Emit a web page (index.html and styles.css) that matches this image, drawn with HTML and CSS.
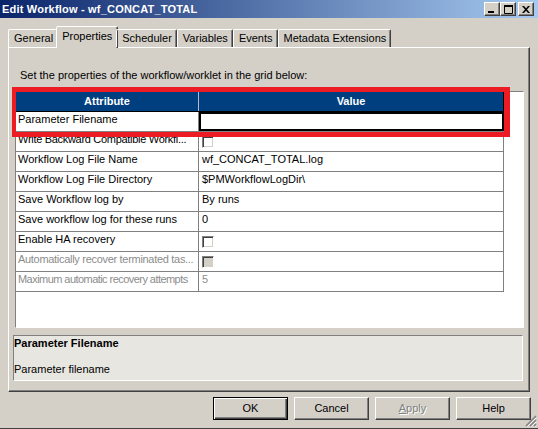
FILE: index.html
```html
<!DOCTYPE html>
<html>
<head>
<meta charset="utf-8">
<link rel="stylesheet" href="styles.css">
</head>
<body>
<div class="window">
  <div class="titlebar">
    <span class="title">Edit Workflow - wf_CONCAT_TOTAL</span>
    <div class="tb-buttons">
      <span class="tb-btn"><svg width="8" height="7" viewBox="0 0 8 7"><rect x="0" y="5" width="6" height="2" fill="#000"/></svg></span>
      <span class="tb-btn"><svg width="9" height="9" viewBox="0 0 9 9"><path d="M0.5 0.5h8v8h-8z M0 1.5h9" fill="none" stroke="#000" stroke-width="1"/><rect x="0" y="0" width="9" height="2" fill="#000"/></svg></span>
      <span class="tb-btn tb-close"><svg width="8" height="7" viewBox="0 0 8 7"><path d="M0 0h2l2 2.2 2-2.2h2L5 3.5 8 7H6L4 4.8 2 7H0l3-3.5z" fill="#000"/></svg></span>
    </div>
  </div>

  <div class="tabs">
    <div class="tab">General</div>
    <div class="tab active">Properties</div>
    <div class="tab">Scheduler</div>
    <div class="tab">Variables</div>
    <div class="tab">Events</div>
    <div class="tab">Metadata Extensions</div>
  </div>

  <div class="panel">
    <p class="intro">Set the properties of the workflow/worklet in the grid below:</p>
    <div class="grid">
      <div class="row head">
        <div class="cell attr">Attribute</div>
        <div class="cell val">Value</div>
      </div>
      <div class="row">
        <div class="cell attr">Parameter Filename</div>
        <div class="cell val editing"></div>
      </div>
      <div class="row">
        <div class="cell attr tight">Write Backward Compatible Workfl...</div>
        <div class="cell val"><span class="check"></span></div>
      </div>
      <div class="row">
        <div class="cell attr">Workflow Log File Name</div>
        <div class="cell val">wf_CONCAT_TOTAL.log</div>
      </div>
      <div class="row">
        <div class="cell attr">Workflow Log File Directory</div>
        <div class="cell val">$PMWorkflowLogDir\</div>
      </div>
      <div class="row">
        <div class="cell attr">Save Workflow log by</div>
        <div class="cell val">By runs</div>
      </div>
      <div class="row">
        <div class="cell attr">Save workflow log for these runs</div>
        <div class="cell val">0</div>
      </div>
      <div class="row">
        <div class="cell attr">Enable HA recovery</div>
        <div class="cell val"><span class="check"></span></div>
      </div>
      <div class="row disabled">
        <div class="cell attr tight">Automatically recover terminated tas...</div>
        <div class="cell val"><span class="check check-disabled"></span></div>
      </div>
      <div class="row disabled">
        <div class="cell attr tighter">Maximum automatic recovery attempts</div>
        <div class="cell val">5</div>
      </div>
    </div>
    <div class="highlight"></div>
    <div class="desc">
      <div class="desc-title">Parameter Filename</div>
      <div class="desc-text">Parameter filename</div>
    </div>
  </div>

  <div class="buttons">
    <div class="btn btn-default">OK</div>
    <div class="btn">Cancel</div>
    <div class="btn btn-disabled"><span><u>A</u>pply</span></div>
    <div class="btn">Help</div>
  </div>

  <svg class="grip" width="12" height="12" viewBox="0 0 12 12">
    <path d="M11 1L1 11M11 5L5 11M11 9L9 11" stroke="#808080" stroke-width="1.5"/>
    <path d="M11.5 2.5L2.5 11.5M11.5 6.5L6.5 11.5M11.5 10.5L10.5 11.5" stroke="#fff" stroke-width="0.8"/>
  </svg>
</div>
</body>
</html>
```
FILE: styles.css
```css
html, body {
  margin: 0;
  padding: 0;
}
body {
  background: #d4d0c8;
  font-family: "Liberation Sans", Arial, sans-serif;
  font-size: 11px;
  line-height: 13px;
  color: #000;
}
.window {
  position: relative;
  width: 538px;
  height: 429px;
  box-sizing: border-box;
  border-bottom: 1px solid #404040;
  overflow: hidden;
  display: flex;
  flex-direction: column;
}
.titlebar {
  height: 18px;
  flex: none;
  background: linear-gradient(to right, #0a246a, #a6caf0);
  display: flex;
  align-items: center;
  justify-content: space-between;
  padding: 0 4px 0 2px;
}
.title {
  color: #fff;
  font-weight: bold;
  font-size: 11px;
  letter-spacing: 0.2px;
}
.tb-buttons {
  display: flex;
}
.tb-btn {
  width: 16px;
  height: 14px;
  box-sizing: border-box;
  background: #d4d0c8;
  border: 1px solid;
  border-color: #fff #404040 #404040 #fff;
  box-shadow: inset -1px -1px #808080;
  display: flex;
  align-items: center;
  justify-content: center;
}
.tb-close {
  margin-left: 2px;
}
.tabs {
  display: flex;
  align-items: flex-end;
  height: 21px;
  margin-top: 8px;
  padding-left: 8px;
  position: relative;
  z-index: 1;
  flex: none;
}
.tab {
  height: 18px;
  box-sizing: border-box;
  padding: 2px 4px 0 5px;
  border: 1px solid;
  border-bottom: none;
  border-color: #fff #404040 transparent #fff;
  box-shadow: inset -1px 0 #808080;
  border-radius: 2px 2px 0 0;
  white-space: nowrap;
}
.tab.active {
  height: 22px;
  margin: 0 -2px -1px -2px;
  padding: 3px 5px 0 5px;
  background: #d4d0c8;
}
.panel {
  position: relative;
  margin: 0 8px;
  height: 345px;
  flex: none;
  box-sizing: border-box;
  border: 1px solid;
  border-color: #fff #404040 #404040 #fff;
  box-shadow: inset -1px -1px #808080;
  display: flex;
  flex-direction: column;
  align-items: flex-start;
}
.intro {
  margin: 21px 0 0 11px;
  white-space: nowrap;
}
.grid {
  margin: 9px 0 0 6px;
  width: 509px;
  height: 237px;
  box-sizing: border-box;
  border: 1px solid;
  border-color: #808080 #fff #fff #808080;
  background: #fff;
}
.row {
  display: flex;
  width: 488px;
  height: 20px;
  box-sizing: border-box;
  border-bottom: 1px solid #808080;
}
.cell {
  box-sizing: border-box;
  border-right: 1px solid #808080;
  padding-top: 1px;
  white-space: nowrap;
  overflow: hidden;
}
.cell.attr {
  width: 183px;
  padding-left: 2px;
}
.cell.val {
  width: 305px;
  padding-left: 3px;
}
.cell.tight {
  letter-spacing: -0.3px;
}
.cell.tighter {
  letter-spacing: -0.55px;
}
.row.head {
  background: #003f7f;
  border-bottom: 1px solid #000;
  color: #fff;
  font-weight: bold;
}
.row.head .cell {
  text-align: center;
  padding: 0;
  line-height: 19px;
}
.row.head .cell.attr {
  border-right-color: #b8b8c8;
}
.row.head .cell.val {
  border-right-color: #000;
}
.cell.editing {
  outline: 2px solid #000;
  outline-offset: -2px;
}
.row.disabled {
  color: #8c8c8c;
}
.check {
  display: block;
  width: 12px;
  height: 12px;
  margin-top: 3px;
  box-sizing: border-box;
  border: 1px solid;
  border-color: #808080 #fff #fff #808080;
  box-shadow: inset 1px 1px #404040, inset -1px -1px #d4d0c8;
  background: #fff;
}
.check-disabled {
  background: #d4d0c8;
}
.highlight {
  position: absolute;
  left: 3px;
  top: 39px;
  width: 498px;
  height: 50px;
  box-sizing: border-box;
  border: solid #ed1c24;
  border-width: 5px 6px 5px 4px;
}
.desc {
  margin: 7px 0 0 4px;
  width: 510px;
  height: 46px;
  box-sizing: border-box;
  border: 1px solid;
  border-color: #808080 #fff #fff #808080;
  background: #e8e6e1;
  padding-top: 1px;
}
.desc-title {
  font-weight: bold;
}
.desc-text {
  margin-top: 13px;
}
.buttons {
  display: flex;
  justify-content: flex-end;
  gap: 6px;
  margin-top: 5px;
  padding-right: 7px;
  flex: none;
}
.btn {
  width: 75px;
  height: 23px;
  box-sizing: border-box;
  border: 1px solid;
  border-color: #fff #404040 #404040 #fff;
  box-shadow: inset -1px -1px #808080;
  display: flex;
  align-items: center;
  justify-content: center;
}
.btn-default {
  border-color: #000;
  box-shadow: inset 1px 1px #fff, inset -1px -1px #404040, inset -2px -2px #808080;
}
.btn-disabled {
  color: #808080;
  text-shadow: 1px 1px 0 #fff;
}
.grip {
  position: absolute;
  right: 1px;
  bottom: 1px;
}
```
